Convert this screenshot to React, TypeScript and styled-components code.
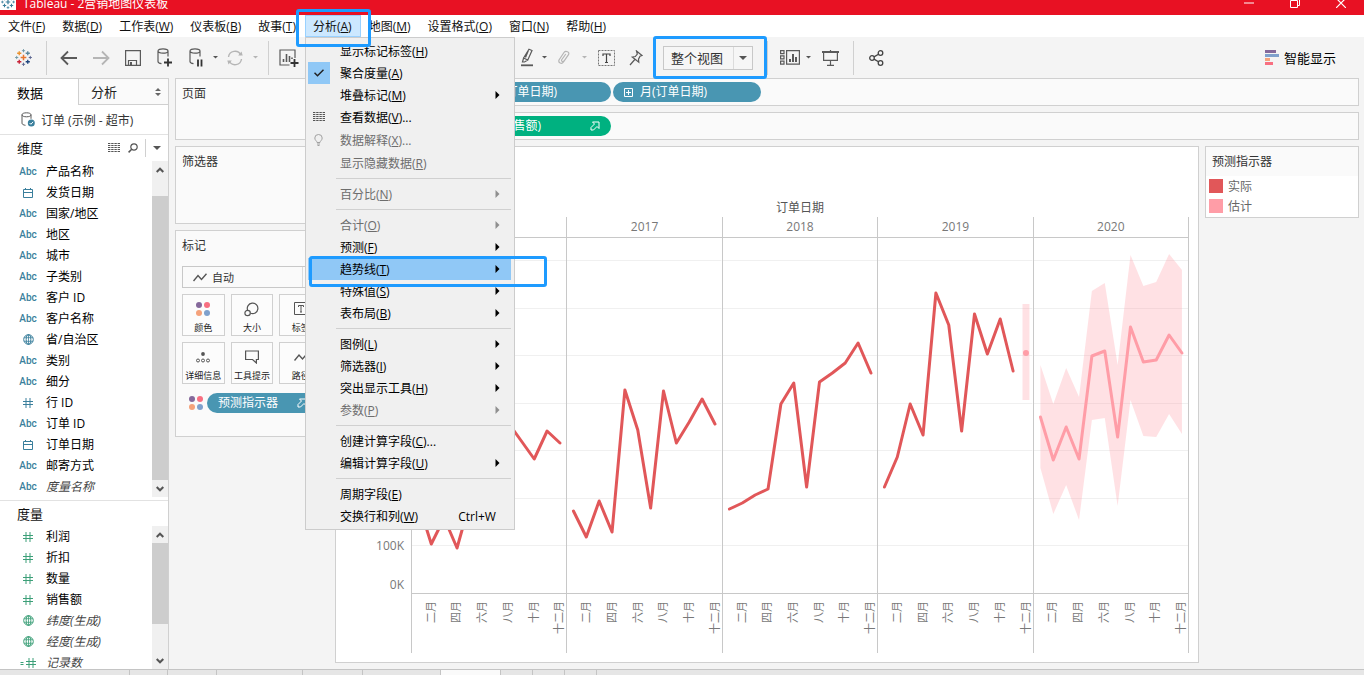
import React from "react";
import styled, { createGlobalStyle, css } from "styled-components";

const sans = `"Open Sans", "Noto Sans CJK SC", sans-serif`;
const line = "#d0d0d0";
const teal = "#4996b2";
const actual = "#e15759";
const estimate = "#ff9da7";

const Global = createGlobalStyle`
  * { box-sizing: border-box; }
  body { margin: 0; background: #f4f4f4; font-family: ${sans}; font-size: 12px; color: #111; }
  button, select { font: inherit; color: inherit; }
  button { border: 0; background: none; padding: 0; }
  ul { list-style: none; margin: 0; padding: 0; }
  h2 { margin: 0; font-weight: 400; }
  svg { display: block; flex: none; }
`;

/* ---------- shell ---------- */
const Page = styled.div`
  display: flex;
  flex-direction: column;
  height: 100vh;
  overflow: hidden;
`;
const TitleBar = styled.header`
  display: flex;
  align-items: flex-end;
  height: 15px;
  flex: none;
  overflow: hidden;
  background: #e81123;
  color: #fff;
`;
const AppIcon = styled.span`
  display: grid;
  place-items: center;
  width: 16px;
  height: 16px;
  margin: 0 7px 5px 0;
  background: #fff;
`;
const TitleText = styled.span`
  flex: 1;
  line-height: 22px;
  white-space: nowrap;
`;
const WindowButton = styled.button`
  display: grid;
  place-items: center;
  width: 46px;
  height: 24px;
`;
const MenuBar = styled.nav`
  display: flex;
  height: 22px;
  flex: none;
  background: #fff;
`;
const MenuEntry = styled.div`
  position: relative;
`;
const MenuTrigger = styled.button<{ $open?: boolean }>`
  height: 22px;
  padding: 2px 9px 0 8px;
  line-height: 20px;
  white-space: nowrap;
  ${(p) => p.$open && css`
    background: #cce8ff;
    box-shadow: inset 0 0 0 1px #99d1ff;
  `}
`;
const Callout = styled.span<{ $inset: string }>`
  position: absolute;
  inset: ${(p) => p.$inset};
  z-index: 30;
  border: 3px solid #1e9bff;
  border-radius: 3px;
  pointer-events: none;
`;

/* ---------- drop-down menu ---------- */
const Dropdown = styled.div`
  position: absolute;
  top: 22px;
  left: 0;
  z-index: 20;
  width: 210px;
  padding: 2px 3px 2px 2px;
  border: 1px solid #ccc;
  background: #f0f0f0;
`;
const MenuItem = styled.button<{ $hot?: boolean; $tall?: boolean }>`
  position: relative;
  display: flex;
  align-items: center;
  width: 100%;
  height: ${(p) => (p.$tall ? 24 : 22)}px;
  text-align: left;
  white-space: nowrap;
  color: #000;
  background: ${(p) => (p.$hot ? "#90c8f6" : "transparent")};
  &:disabled { color: #6d6d6d; }
`;
const ItemIcon = styled.span<{ $checked?: boolean }>`
  display: grid;
  place-items: center;
  width: 22px;
  height: 22px;
  margin-right: 10px;
  background: ${(p) => (p.$checked ? "#90c8f6" : "transparent")};
`;
const ItemText = styled.span`
  flex: 1;
  padding-top: 2px;
  line-height: 20px;
`;
const ItemEnd = styled.span`
  display: flex;
  justify-content: flex-end;
  padding-right: 11px;
`;
const ItemKey = styled(ItemEnd)`
  padding-top: 2px;
  padding-right: 15px;
  line-height: 20px;
`;
const MenuRule = styled.hr`
  height: 1px;
  margin: 4px 0 4px 28px;
  border: 0;
  background: ${line};
`;

/* ---------- toolbar ---------- */
const Toolbar = styled.div`
  display: flex;
  align-items: center;
  height: 41px;
  flex: none;
  padding-right: 28px;
`;
const Tool = styled.button<{ $w?: number }>`
  display: grid;
  place-items: center;
  width: ${(p) => p.$w ?? 32}px;
  height: 32px;
  flex: none;
`;
const ToolGap = styled.span<{ $w: number }>`
  width: ${(p) => p.$w}px;
  flex: none;
`;
const ToolRule = styled.span`
  width: 1px;
  height: 34px;
  flex: none;
  background: ${line};
`;
const Grow = styled.span`
  flex: 1;
`;
const FitBox = styled.div`
  position: relative;
  display: flex;
`;
const Picker = styled.div<{ $small?: boolean }>`
  display: flex;
  align-items: center;
  height: ${(p) => (p.$small ? 22 : 24)}px;
  width: ${(p) => (p.$small ? "auto" : "90px")};
  border: 1px solid #c8c8c8;
  background: ${(p) => (p.$small ? "#fafafa" : "#f6f6f6")};
  font-size: ${(p) => (p.$small ? 11 : 13)}px;
  color: #333;
  padding-left: ${(p) => (p.$small ? 10 : 7)}px;
`;
const PickerSelect = styled.select`
  appearance: none;
  flex: 1;
  min-width: 0;
  height: 100%;
  padding: 0;
  border: 0;
  outline: 0;
  background: transparent;
`;
const PickerCaret = styled.span`
  display: grid;
  place-items: center;
  width: 19px;
  height: 100%;
  flex: none;
  border-left: 1px solid #dcdcdc;
`;
const SmartButton = styled.button`
  display: flex;
  align-items: center;
  gap: 5px;
  font-size: 13px;
  color: #000;
`;

/* ---------- body ---------- */
const Body = styled.div`
  display: flex;
  flex: 1;
  min-height: 0;
  padding-right: 5px;
`;
const DataPane = styled.aside`
  display: flex;
  flex-direction: column;
  width: 169px;
  flex: none;
  background: #fff;
  border: solid ${line};
  border-width: 1px 1px 0 0;
`;
const PaneTabs = styled.div`
  display: flex;
  height: 26px;
  flex: none;
  font-size: 13px;
`;
const PaneTab = styled.button<{ $active?: boolean }>`
  display: flex;
  align-items: center;
  justify-content: space-between;
  width: ${(p) => (p.$active ? "78px" : "auto")};
  flex: ${(p) => (p.$active ? "none" : "1")};
  padding: 0 7px 0 ${(p) => (p.$active ? 17 : 12)}px;
  color: ${(p) => (p.$active ? "#000" : "#222")};
  ${(p) => !p.$active && css`
    border: solid ${line};
    border-width: 0 0 1px 1px;
    background: #fafafa;
  `}
`;
const SourceRow = styled.div`
  display: flex;
  align-items: center;
  gap: 6px;
  height: 30px;
  flex: none;
  padding-left: 21px;
  border-bottom: 1px solid #e2e2e2;
  color: #333;
`;
const PaneHead = styled.div<{ $rule?: boolean }>`
  display: flex;
  align-items: center;
  height: 26px;
  flex: none;
  padding-left: 17px;
  border-top: ${(p) => (p.$rule ? "1px solid #e2e2e2" : "0")};
  h2 { flex: 1; font-size: 13px; line-height: 20px; }
`;
const HeadTools = styled.div`
  display: flex;
  align-items: center;
  button { display: grid; place-items: center; height: 18px; }
  button:nth-child(1) { width: 14px; margin-right: 5px; }
  button:nth-child(2) { width: 14px; margin-right: 5px; }
  button:nth-child(3) { width: 23px; border-left: 1px solid ${line}; }
`;
const FieldBlock = styled.div<{ $fill?: boolean }>`
  display: flex;
  overflow: hidden;
  flex: ${(p) => (p.$fill ? "1" : "none")};
  min-height: 0;
  margin-bottom: ${(p) => (p.$fill ? 0 : 3)}px;
`;
const FieldList = styled.ul`
  flex: 1;
`;
const Field = styled.li<{ $generated?: boolean }>`
  display: flex;
  align-items: center;
  height: 21px;
  line-height: 14px;
  white-space: nowrap;
  color: ${(p) => (p.$generated ? "#444" : "#000")};
  font-style: ${(p) => (p.$generated ? "italic" : "normal")};
`;
const FieldIcon = styled.span<{ $measure?: boolean }>`
  display: grid;
  place-items: center;
  width: 20px;
  margin: 0 8px 0 18px;
  font: 500 10px/12px Roboto, sans-serif;
  color: ${(p) => (p.$measure ? "#3c9f78" : "#3a7f9c")};
`;
const Scroll = styled.div`
  display: flex;
  flex-direction: column;
  align-items: center;
  width: 16px;
  background: #f0f0f0;
`;
const ScrollArrow = styled.button`
  display: grid;
  place-items: center;
  width: 100%;
  height: 17px;
  flex: none;
`;
const ScrollThumb = styled.span<{ $before: number; $after: number }>`
  width: 100%;
  flex: 1;
  margin: ${(p) => p.$before}px 0 ${(p) => p.$after}px;
  background: #cdcdcd;
`;
const Cards = styled.div`
  display: flex;
  flex-direction: column;
  gap: 6px;
  width: 154px;
  flex: none;
  margin: 0 6px;
`;
const Card = styled.section<{ $h: number }>`
  min-height: ${(p) => p.$h}px;
  padding: 0 6px;
  border: 1px solid ${line};
  background: #fafafa;
  h2 { font-size: 12px; line-height: 30px; margin-bottom: 5px; color: #333; }
`;
const MarkGrid = styled.div`
  display: grid;
  grid-template-columns: repeat(3, 1fr);
  gap: 6px;
  margin-top: 6px;
`;
const MarkButton = styled.button`
  display: flex;
  flex-direction: column;
  align-items: center;
  justify-content: space-between;
  height: 42px;
  padding: 7px 0 0;
  border: 1px solid ${line};
  background: #fcfcfc;
  font-size: 9px;
  line-height: 14px;
  white-space: nowrap;
  color: #222;
`;
const PillRow = styled.div`
  display: flex;
  align-items: center;
  gap: 4px;
  margin-top: 9px;
  padding: 0 4px 0 7px;
`;
const Pill = styled.button<{ $green?: boolean; $fill?: boolean }>`
  display: flex;
  align-items: center;
  gap: 7px;
  width: 148px;
  ${(p) => p.$fill && css`width: auto; flex: 1;`}
  height: 20px;
  padding: 0 11px;
  border-radius: 10px;
  background: ${(p) => (p.$green ? "#00b180" : teal)};
  color: #fff;
  white-space: nowrap;
  text-align: left;
`;
const PillText = styled.span`
  flex: 1;
  line-height: 18px;
`;
const Main = styled.main`
  display: flex;
  flex-direction: column;
  gap: 6px;
  flex: 1;
  min-width: 0;
  padding-bottom: 6px;
`;
const Shelf = styled.div`
  display: flex;
  align-items: center;
  gap: 2px;
  height: 28px;
  flex: none;
  padding-left: 127px;
  border: 1px solid ${line};
  background: #fafafa;
`;
const ViewRow = styled.div`
  display: flex;
  align-items: flex-start;
  gap: 6px;
  flex: 1;
  min-height: 0;
`;

/* ---------- chart ---------- */
const Chart = styled.section`
  display: flex;
  flex-direction: column;
  align-self: stretch;
  flex: 1;
  min-width: 0;
  padding: 0 9px 9px 0;
  border: 1px solid ${line};
  background: #fff;
  color: #787878;
`;
const ChartTitle = styled.h2`
  height: 70px;
  flex: none;
  padding: 52px 0 0 75px;
  font-size: 12px;
  line-height: 18px;
  text-align: center;
  color: #555;
`;
const Panes = styled.div`
  display: grid;
  grid-template-columns: 75px repeat(5, 1fr);
  flex: 1;
  min-height: 0;
  border-right: 1px solid #c8c8c8;
`;
const AxisColumn = styled.div`
  display: flex;
  flex-direction: column;
  justify-content: flex-end;
  gap: 23px;
  padding: 0 7px 60px 0;
  text-align: right;
  line-height: 16px;
`;
const Pane = styled.div`
  display: flex;
  flex-direction: column;
  min-width: 0;
  min-height: 0;
  border-left: 1px solid #c8c8c8;
`;
const PaneYear = styled.div`
  height: 21px;
  flex: none;
  line-height: 20px;
  text-align: center;
  border-bottom: 1px solid #c8c8c8;
`;
const Plot = styled.svg`
  width: 100%;
  flex: 1 1 0;
  min-height: 0;
`;
const Months = styled.div`
  display: grid;
  grid-template-columns: repeat(12, 1fr);
  height: 60px;
  flex: none;
  padding-top: 7px;
  border-top: 1px solid #c8c8c8;
`;
const Month = styled.span<{ $col: number }>`
  grid-column: ${(p) => p.$col};
  grid-row: 1;
  justify-self: center;
  align-self: start;
  writing-mode: vertical-rl;
  text-orientation: sideways;
  transform: rotate(180deg);
  font-size: 11px;
  line-height: 14px;
  white-space: nowrap;
`;
const Legend = styled.aside`
  width: 154px;
  flex: none;
  padding-bottom: 1px;
  border: 1px solid ${line};
  background: #fff;
  h2 {
    padding-left: 6px;
    font-size: 12px;
    line-height: 29px;
    color: #333;
    background: #fafafa;
  }
`;
const LegendRow = styled.div`
  display: flex;
  align-items: center;
  gap: 5px;
  height: 20px;
  padding-left: 3px;
  color: #666;
`;
const Swatch = styled.span<{ $color: string }>`
  width: 14px;
  height: 14px;
  background: ${(p) => p.$color};
`;
const SheetTabs = styled.footer`
  display: flex;
  height: 6px;
  flex: none;
  border-top: 1px solid #c4c4c4;
  background: #e6e6e6;
`;
const SheetTab = styled.span<{ $w: number; $active?: boolean }>`
  width: ${(p) => p.$w}px;
  border-right: 1px solid #c4c4c4;
  background: ${(p) => (p.$active ? "#fafafa" : "transparent")};
`;

/* ---------- icons ---------- */
const ink = "#5a5a5a";
const faint = "#b5b5b5";

const Caret = ({ color = "#555", size = 8 }: { color?: string; size?: number }) => (
  <svg width={size} height={size / 2} viewBox="0 0 8 4"><path d="M0 0h8L4 4z" fill={color} /></svg>
);
const cross = (x: number, y: number, r: number) => `M${x - r} ${y}h${r * 2}M${x} ${y - r}v${r * 2}`;
const LogoIcon = ({ size = 17, mono }: { size?: number; mono?: string }) => (
  <svg width={size} height={size} viewBox="0 0 18 18" fill="none" strokeWidth="1.4">
    <path d={cross(9, 9, 3)} stroke={mono ?? "#e8762d"} strokeWidth="1.6" />
    <path d={cross(4.5, 4.5, 2.2)} stroke={mono ?? "#eb912c"} />
    <path d={cross(13.5, 4.5, 2.2)} stroke={mono ?? "#59879b"} />
    <path d={cross(4.5, 13.5, 2.2)} stroke={mono ?? "#c72035"} />
    <path d={cross(13.5, 13.5, 2.2)} stroke={mono ?? "#1f457e"} />
    <path d={cross(9, 1.8, 1.7) + cross(1.8, 9, 1.7)} stroke={mono ?? "#7199a6"} strokeWidth="1" />
    <path d={cross(16.2, 9, 1.7) + cross(9, 16.2, 1.7)} stroke={mono ?? "#5b6591"} strokeWidth="1" />
  </svg>
);
const ArrowIcon = ({ forward }: { forward?: boolean }) => (
  <svg width="18" height="16" viewBox="0 0 18 16" fill="none" stroke={forward ? faint : ink} strokeWidth="1.8">
    <path d={forward ? "M1 8h15M10 1.5L16.5 8L10 14.5" : "M17 8H2M8 1.5L1.5 8L8 14.5"} />
  </svg>
);
const SaveIcon = () => (
  <svg width="16" height="16" viewBox="0 0 16 16" fill="none" stroke={ink} strokeWidth="1.2">
    <path d="M.6.6h14.8v14.8H.6zM3.5 15v-4.5h8V15" /><path d="M5 12h2v3H5z" fill={ink} stroke="none" />
  </svg>
);
const cylinder = "M1 3v10.500c0 1 1.500 1.900 3.500 2.100M11 3v5.500M1 3c0-1.300 2.200-2.200 5-2.200s5 .9 5 2.200-2.200 2.200-5 2.200S1 4.300 1 3z";
const AddSourceIcon = () => (
  <svg width="16" height="19" viewBox="0 0 16 19" fill="none" stroke={ink} strokeWidth="1.200">
    <path d={cylinder} /><path d="M7 14.500h8M11 10.500v8" stroke="#333" strokeWidth="1.800" />
  </svg>
);
const PauseSourceIcon = () => (
  <svg width="14" height="19" viewBox="0 0 14 19" fill="none" stroke={ink} strokeWidth="1.200">
    <path d={cylinder} /><path d="M9 11.500v7M12.500 11.500v7" stroke="#333" strokeWidth="1.800" />
  </svg>
);
const RefreshIcon = () => (
  <svg width="18" height="16" viewBox="0 0 18 16" fill="none" stroke={faint} strokeWidth="1.400">
    <path d="M2.500 7A6.500 6.500 0 0 1 14.800 5M15.500 9A6.500 6.500 0 0 1 3.200 11" />
    <path d="M12.200 5.500h4.500L15.500 1.500zM5.800 10.500H1.300l1.200 4z" fill={faint} stroke="none" />
  </svg>
);
const NewSheetIcon = () => (
  <svg width="20" height="18" viewBox="0 0 20 18" fill="none" stroke={ink} strokeWidth="1.200">
    <path d="M16 9V1H1v15h9.500" /><path d="M4.500 13v-3M7.500 13V5M10.500 13V7M13 10V8.500" strokeWidth="1.600" />
    <path d="M11.500 14h8M15.500 10v8" stroke="#333" strokeWidth="1.800" />
  </svg>
);
const HighlighterIcon = () => (
  <svg width="14" height="19" viewBox="0 0 14 19" fill="none" stroke={ink} strokeWidth="1.200">
    <path d="M9 1.200l3 1.300-4.200 9.500-4.200-2zM3.600 10L2.500 14l2 0 3.300-2M8.300 2.800L5.500 9.500" />
    <path d="M1 17.300h12" strokeWidth="1.800" />
  </svg>
);
const ClipIcon = () => (
  <svg width="14" height="16" viewBox="0 0 14 16" fill="none" stroke={faint} strokeWidth="1.200">
    <path d="M11 5.500L6.500 12c-1.800 2.400-5.500 1-4.500-2L7 2.500c1.600-2.300 6-.6 4.500 2.200L7 11c-1 1.200-3 .4-2.300-1.300L8.800 4" />
  </svg>
);
const TextIcon = () => (
  <svg width="17" height="16" viewBox="0 0 17 16" fill="none" stroke="#777">
    <path d="M.5.5h16v15H.5z" strokeDasharray="2 1" /><path d="M5 6V4h7v2M8.500 4v8.500M7 12.500h3" stroke="#444" strokeWidth="1.200" />
  </svg>
);
const PinIcon = () => (
  <svg width="14" height="16" viewBox="0 0 14 16" fill="none" stroke={ink} strokeWidth="1.200">
    <path d="M7.500 1l5.500 4.500-2 .7-1.500 3 .3 3-6.500-5.200 3-.5 2-2.500zM5.800 9.500L1 15" />
  </svg>
);
const CardsIcon = () => (
  <svg width="20" height="15" viewBox="0 0 20 15" fill="none" stroke={ink} strokeWidth="1.200">
    <path d="M.6.600h3.400v3H.6zM.6 5.900h3.400v3H.6zM.6 11.100h3.400v3H.6zM6.600.600h12.800v13.600H6.600z" />
    <path d="M10 12V9M13 12V4M16 12V7" strokeWidth="2" />
  </svg>
);
const PresentIcon = () => (
  <svg width="17" height="16" viewBox="0 0 17 16" fill="none" stroke={ink} strokeWidth="1.200">
    <path d="M0 2h17" strokeWidth="2" /><path d="M8.500 0v2M1.600 3v7.400h13.800V3M8.500 10.400v5M5 15.400h7" />
  </svg>
);
const ShareIcon = () => (
  <svg width="15" height="16" viewBox="0 0 15 16" fill="none" stroke="#444" strokeWidth="1.300">
    <circle cx="3" cy="8" r="2.300" /><circle cx="11.500" cy="3" r="2.300" /><circle cx="11.500" cy="13" r="2.300" />
    <path d="M5 6.900l4.500-2.700M5 9.100l4.500 2.700" />
  </svg>
);
const SmartIcon = () => (
  <svg width="14" height="15"><path d="M0 0h11v3H0z" fill="#85699b" /><path d="M0 4h14v3H0z" fill="#7fa1cd" /><path d="M0 8h5v3H0z" fill="#f5a27b" /><path d="M0 12h8v3H0z" fill="#f86f81" /></svg>
);
const GridIcon = () => (
  <svg width="12" height="10" viewBox="0 0 12 10" stroke="#555" strokeWidth="1" strokeDasharray="2.400 .8">
    <path d="M0 .500h12M0 2.500h12M0 4.500h12M0 6.500h12M0 8.500h12" />
  </svg>
);
const SearchIcon = () => (
  <svg width="10" height="10" viewBox="0 0 10 10" fill="none" stroke="#555" strokeWidth="1.200"><circle cx="6" cy="4" r="3.200" /><path d="M3.700 6.300L.6 9.400" strokeWidth="1.500" /></svg>
);
const SourceIcon = () => (
  <svg width="14" height="15" viewBox="0 0 14 15" fill="none" stroke={ink}>
    <path d="M1 2.800v8.500c0 1 1.500 1.800 3.500 2M10 2.800v4M1 2.800C1 1.500 3 .8 5.500.8s4.500.7 4.500 2-2 2-4.500 2-4.500-.7-4.500-2z" />
    <circle cx="10.300" cy="11" r="3.500" fill="#3a7f9c" stroke="none" /><path d="M8.600 11l1.300 1.300 2.200-2.500" stroke="#fff" />
  </svg>
);
const SortIcon = () => (
  <svg width="6" height="8" viewBox="0 0 6 8" fill="#666"><path d="M0 3h6L3 0zM0 5h6L3 8z" /></svg>
);
const CalendarIcon = () => (
  <svg width="10" height="10" viewBox="0 0 10 10" fill="none" stroke="currentColor"><path d="M.5 1.500h9v8h-9zM.5 4.500h9M2.500 0v1.500M7.500 0v1.500" /></svg>
);
const GlobeIcon = () => (
  <svg width="11" height="11" viewBox="0 0 11 11" fill="none" stroke="currentColor"><circle cx="5.500" cy="5.500" r="4.800" /><ellipse cx="5.500" cy="5.500" rx="2.300" ry="4.800" /><path d="M5.500.5v10M1 3.700h9M1 7.300h9" strokeWidth=".8" /></svg>
);
const HashIcon = ({ calc }: { calc?: boolean }) => (
  <svg width={calc ? 16 : 10} height="10" viewBox={calc ? "-6 0 16 10" : "0 0 10 10"} fill="none" stroke="currentColor"><path d="M3 0v10M7 0v10M0 3.500h10M0 6.500h10" />{calc && <path d="M-5.500 4.500h3M-5.500 6.500h3" />}</svg>
);
const Chevron = ({ up }: { up?: boolean }) => (
  <svg width="8" height="6" viewBox="0 0 8 6" fill="none" stroke="#555" strokeWidth="2"><path d={up ? "M.7 5L4 1.700L7.300 5" : "M.7 1L4 4.300L7.300 1"} /></svg>
);
const DotsIcon = () => (
  <svg width="14" height="14" viewBox="0 0 14 14"><circle cx="3" cy="3" r="3" fill="#85699b" /><circle cx="11" cy="3" r="3" fill="#f86f81" /><circle cx="3" cy="11" r="3" fill="#f5a27b" /><circle cx="11" cy="11" r="3" fill="#7fa1cd" /></svg>
);
const ZigIcon = ({ w = 14, h = 9 }: { w?: number; h?: number }) => (
  <svg width={w} height={h} viewBox="0 0 14 9" fill="none" stroke="#555" strokeWidth="1.400"><path d="M.5 8L5 2.500L8.500 6.500L13.500.8" /></svg>
);
const SizeIcon = () => (
  <svg width="15" height="15" viewBox="0 0 15 15" fill="none" stroke="#555" strokeWidth="1.200"><path d="M3.600 8.200A5.300 5.300 0 1 1 6.600 11.300" /><circle cx="3.600" cy="11" r="2.700" /></svg>
);
const LabelIcon = () => (
  <svg width="14" height="13" viewBox="0 0 14 13" fill="none" stroke="#555"><path d="M.5.500h13v12H.5z" /><path d="M4.500 5V3.500h5V5M7 3.500V10M6 10h2" /></svg>
);
const DetailIcon = () => (
  <svg width="14" height="14" viewBox="0 0 14 14" fill="none" stroke="#555"><circle cx="7" cy="4" r="1.900" fill="#555" stroke="none" /><circle cx="2" cy="10.500" r="1.500" /><circle cx="7" cy="10.500" r="1.500" /><circle cx="12" cy="10.500" r="1.500" /></svg>
);
const TooltipIcon = () => (
  <svg width="14" height="14" viewBox="0 0 14 14" fill="none" stroke="#555" strokeWidth="1.200"><path d="M.6 1h12.800v8.500h-2V13L7.500 9.500H.6z" /></svg>
);
const ForecastIcon = () => (
  <svg width="10" height="10" viewBox="0 0 10 10" fill="none" stroke="#fff"><path d="M2.500 1h6.500v6.500L7 5.500 3.500 9 1 9 1 6.500 4.500 3z" /></svg>
);
const PlusBoxIcon = () => (
  <svg width="9" height="9" viewBox="0 0 9 9" fill="none" stroke="#fff"><path d="M.5.500h8v8h-8zM2 4.500h5M4.500 2v5" /></svg>
);
const CheckIcon = () => (
  <svg width="10" height="8" viewBox="0 0 10 8" fill="none" stroke="#222" strokeWidth="1.500"><path d="M.5 3.800L3.500 6.800L9.500.8" /></svg>
);
const BulbIcon = () => (
  <svg width="9" height="12" viewBox="0 0 9 12" fill="none" stroke="#a0a0a0"><path d="M3 8.500C3 7 .8 6.300.8 4a3.700 3.500 0 0 1 7.400 0C8.200 6.300 6 7 6 8.500zM3 10h3M3.500 11.500h2" /></svg>
);
const SubmenuIcon = ({ muted }: { muted?: boolean }) => (
  <svg width="5" height="8" viewBox="0 0 5 8"><path d="M.5 0L4.500 4L.5 8z" fill={muted ? "#8f8f8f" : "#000"} /></svg>
);

/* ---------- data ---------- */
type Entry = { text: string; hot: string; tail?: string; icon?: React.ReactNode; checked?: boolean; off?: boolean; sub?: boolean; keys?: string; tall?: boolean; marked?: boolean };
const groups: Entry[][] = [
  [
    { text: "显示标记标签", hot: "H" },
    { text: "聚合度量", hot: "A", icon: <CheckIcon />, checked: true },
    { text: "堆叠标记", hot: "M", sub: true },
    { text: "查看数据", hot: "V", tail: "...", icon: <GridIcon /> },
    { text: "数据解释", hot: "X", tail: "...", icon: <BulbIcon />, off: true, tall: true },
    { text: "显示隐藏数据", hot: "R", off: true },
  ],
  [{ text: "百分比", hot: "N", off: true, sub: true }],
  [
    { text: "合计", hot: "O", off: true, sub: true },
    { text: "预测", hot: "F", sub: true },
    { text: "趋势线", hot: "T", sub: true, marked: true },
    { text: "特殊值", hot: "S", sub: true },
    { text: "表布局", hot: "B", sub: true },
  ],
  [
    { text: "图例", hot: "L", sub: true },
    { text: "筛选器", hot: "I", sub: true },
    { text: "突出显示工具", hot: "H", sub: true },
    { text: "参数", hot: "P", off: true, sub: true },
  ],
  [
    { text: "创建计算字段", hot: "C", tail: "..." },
    { text: "编辑计算字段", hot: "U", sub: true },
  ],
  [
    { text: "周期字段", hot: "E" },
    { text: "交换行和列", hot: "W", keys: "Ctrl+W" },
  ],
];

const menus: [string, string][] = [
  ["文件", "F"], ["数据", "D"], ["工作表", "W"], ["仪表板", "B"], ["故事", "T"],
  ["分析", "A"], ["地图", "M"], ["设置格式", "O"], ["窗口", "N"], ["帮助", "H"],
];

type Kind = "abc" | "date" | "geo" | "num" | "calc";
const dimensions: [Kind, string][] = [
  ["abc", "产品名称"], ["date", "发货日期"], ["abc", "国家/地区"], ["abc", "地区"],
  ["abc", "城市"], ["abc", "子类别"], ["abc", "客户 ID"], ["abc", "客户名称"],
  ["geo", "省/自治区"], ["abc", "类别"], ["abc", "细分"], ["num", "行 ID"],
  ["abc", "订单 ID"], ["date", "订单日期"], ["abc", "邮寄方式"], ["abc", "度量名称"],
];
const measures: [Kind, string][] = [
  ["num", "利润"], ["num", "折扣"], ["num", "数量"], ["num", "销售额"],
  ["geo", "纬度(生成)"], ["geo", "经度(生成)"], ["calc", "记录数"],
];
const generated = ["度量名称", "纬度(生成)", "经度(生成)", "记录数"];
const kindIcon: Record<Kind, React.ReactNode> = {
  abc: "Abc", date: <CalendarIcon />, geo: <GlobeIcon />, num: <HashIcon />, calc: <HashIcon calc />,
};

/* Depth of each monthly mark below the top of a pane that is 355 units high. */
const years: { year: string; marks: number[]; forecast?: boolean }[] = [
  { year: "", marks: [265, 306, 280, 310, 264, 200, 260, 185, 203, 221, 193, 205] },
  { year: "2017", marks: [273, 299, 263, 294, 152, 192, 270, 153, 205, 184, 161, 186] },
  { year: "2018", marks: [271, 265, 257, 251, 166, 145, 249, 144, 135, 125, 105, 135] },
  { year: "2019", marks: [249, 219, 166, 197, 55, 87, 193, 76, 116, 81, 133] },
  { year: "2020", marks: [179, 222, 189, 221, 118, 113, 199, 89, 124, 122, 97, 115], forecast: true },
];
const upper = [127, 166, 130, 159, 53, 45, 127, 17, 48, 44, 16, 32];
const lower = [230, 276, 247, 282, 182, 180, 268, 162, 198, 199, 176, 196];
const gridlines = [22, 70, 117, 165, 212, 260, 307];
const at = (i: number, y: number) => `${i * 10 + 5},${y}`;
const months = ["二月", "四月", "六月", "八月", "十月", "十二月"];

/* ---------- parts ---------- */
const AnalysisMenu = () => (
  <Dropdown role="menu">
    {groups.map((group, g) => (
      <React.Fragment key={g}>
        {g > 0 && <MenuRule />}
        {group.map((e) => (
          <MenuItem key={e.text} role="menuitem" disabled={e.off} $hot={e.marked} $tall={e.tall}>
            <ItemIcon $checked={e.checked}>{e.icon}</ItemIcon>
            <ItemText>{e.text}(<u>{e.hot}</u>){e.tail}</ItemText>
            {e.keys && <ItemKey>{e.keys}</ItemKey>}
            {e.sub && <ItemEnd><SubmenuIcon muted={e.off} /></ItemEnd>}
            {e.marked && <Callout $inset="-2px -36px -7px 1px" />}
          </MenuItem>
        ))}
      </React.Fragment>
    ))}
  </Dropdown>
);

const Fields = ({ items, measure }: { items: [Kind, string][]; measure?: boolean }) => (
  <FieldBlock $fill={measure}>
    <FieldList>
      {items.map(([kind, name]) => (
        <Field key={name} $generated={generated.includes(name)}>
          <FieldIcon $measure={measure}>{kindIcon[kind]}</FieldIcon>
          {name}
        </Field>
      ))}
    </FieldList>
    <Scroll>
      <ScrollArrow aria-label="向上"><Chevron up /></ScrollArrow>
      <ScrollThumb $before={measure ? 0 : 18} $after={measure ? 28 : 0} />
      <ScrollArrow aria-label="向下"><Chevron /></ScrollArrow>
    </Scroll>
  </FieldBlock>
);

const SalesChart = () => (
  <Chart>
    <ChartTitle>订单日期</ChartTitle>
    <Panes>
      <AxisColumn><span>100K</span><span>0K</span></AxisColumn>
      {years.map(({ year, marks, forecast }, n) => (
        <Pane key={n}>
          <PaneYear>{year}</PaneYear>
          <Plot viewBox="0 0 120 355" preserveAspectRatio="none">
            {gridlines.map((y) => <rect key={y} x="0" y={y} width="120" height="1" fill="#f0f0f0" />)}
            {forecast && (
              <polygon
                points={[...upper.map((y, i) => at(i, y)), ...lower.map((y, i) => at(i, y)).reverse()].join(" ")}
                fill={estimate}
                opacity="0.3"
              />
            )}
            {year === "2019" && (
              <>
                <rect x="112.300" y="66" width="5.400" height="96" fill={estimate} opacity="0.3" />
                <path d="M115 115h.01" stroke={estimate} strokeWidth="6" strokeLinecap="round" vectorEffect="non-scaling-stroke" />
              </>
            )}
            <polyline
              points={marks.map((y, i) => at(i, y)).join(" ")}
              fill="none"
              stroke={forecast ? estimate : actual}
              strokeWidth="3"
              strokeLinecap="round"
              strokeLinejoin="round"
              vectorEffect="non-scaling-stroke"
            />
          </Plot>
          <Months>
            {months.map((m, i) => <Month key={m} $col={i * 2 + 2}>{m}</Month>)}
          </Months>
        </Pane>
      ))}
    </Panes>
  </Chart>
);

export default function App() {
  return (
    <Page>
      <Global />
      <TitleBar>
        <AppIcon><LogoIcon size={14} mono="#3a7f9c" /></AppIcon>
        <TitleText>Tableau - 2营销地图仪表板</TitleText>
        <WindowButton aria-label="最小化"><svg width="10" height="2"><path d="M0 1h10" stroke="#fff" /></svg></WindowButton>
        <WindowButton aria-label="还原"><svg width="10" height="10" fill="none" stroke="#fff"><path d="M.5 2.500h7v7h-7zM2.500 2.500v-2h7v7h-2" /></svg></WindowButton>
        <WindowButton aria-label="关闭"><svg width="10" height="10" stroke="#fff" strokeWidth="1.200"><path d="M0 0l10 10M10 0L0 10" /></svg></WindowButton>
      </TitleBar>

      <MenuBar>
        {menus.map(([name, key]) => (
          <MenuEntry key={name}>
            <MenuTrigger $open={name === "分析"}>{name}(<u>{key}</u>)</MenuTrigger>
            {name === "分析" && <><AnalysisMenu /><Callout $inset="-6px -10px -10px -9px" /></>}
          </MenuEntry>
        ))}
      </MenuBar>

      <Toolbar>
        <Tool $w={46} aria-label="起始页"><LogoIcon /></Tool>
        <ToolRule />
        <ToolGap $w={6} />
        <Tool aria-label="撤销"><ArrowIcon /></Tool>
        <Tool aria-label="重做"><ArrowIcon forward /></Tool>
        <Tool aria-label="保存"><SaveIcon /></Tool>
        <Tool aria-label="新建数据源"><AddSourceIcon /></Tool>
        <Tool $w={30} aria-label="暂停自动更新"><PauseSourceIcon /></Tool>
        <Tool $w={8} aria-label="更新选项"><Caret size={5} /></Tool>
        <Tool aria-label="运行更新"><RefreshIcon /></Tool>
        <Tool $w={8} aria-label="运行选项"><Caret size={5} color={faint} /></Tool>
        <ToolGap $w={9} />
        <ToolRule />
        <ToolGap $w={4} />
        <Tool aria-label="新建工作表"><NewSheetIcon /></Tool>
        <ToolGap $w={209} />
        <Tool $w={26} aria-label="突出显示"><HighlighterIcon /></Tool>
        <Tool $w={8} aria-label="突出显示选项"><Caret size={5} /></Tool>
        <ToolGap $w={4} />
        <Tool $w={24} aria-label="组成员"><ClipIcon /></Tool>
        <ToolGap $w={4} />
        <Tool $w={8} aria-label="组选项"><Caret size={5} color={faint} /></Tool>
        <ToolGap $w={6} />
        <Tool $w={24} aria-label="标记标签"><TextIcon /></Tool>
        <ToolGap $w={6} />
        <Tool $w={24} aria-label="固定轴"><PinIcon /></Tool>
        <ToolGap $w={15} />
        <FitBox>
          <Picker>
            <PickerSelect aria-label="适合"><option>整个视图</option></PickerSelect>
            <PickerCaret><Caret /></PickerCaret>
          </Picker>
          <Callout $inset="-10px -14px -9px -10px" />
        </FitBox>
        <ToolGap $w={14} />
        <ToolRule />
        <ToolGap $w={8} />
        <Tool $w={28} aria-label="显示卡"><CardsIcon /></Tool>
        <Tool $w={8} aria-label="显示卡选项"><Caret size={5} /></Tool>
        <ToolGap $w={2} />
        <Tool aria-label="演示模式"><PresentIcon /></Tool>
        <ToolGap $w={7} />
        <ToolRule />
        <ToolGap $w={6} />
        <Tool aria-label="共享"><ShareIcon /></Tool>
        <Grow />
        <SmartButton><SmartIcon />智能显示</SmartButton>
      </Toolbar>

      <Body>
        <DataPane>
          <PaneTabs>
            <PaneTab $active>数据</PaneTab>
            <PaneTab>分析<SortIcon /></PaneTab>
          </PaneTabs>
          <SourceRow><SourceIcon />订单 (示例 - 超市)</SourceRow>
          <PaneHead>
            <h2>维度</h2>
            <HeadTools>
              <button aria-label="查看数据"><GridIcon /></button>
              <button aria-label="查找字段"><SearchIcon /></button>
              <button aria-label="选项"><Caret /></button>
            </HeadTools>
          </PaneHead>
          <Fields items={dimensions} />
          <PaneHead $rule><h2>度量</h2></PaneHead>
          <Fields items={measures} measure />
        </DataPane>

        <Cards>
          <Card $h={62}><h2>页面</h2></Card>
          <Card $h={78}><h2>筛选器</h2></Card>
          <Card $h={207}>
            <h2 id="marks">标记</h2>
            <Picker $small>
              <ZigIcon />
              <ToolGap $w={5} />
              <PickerSelect aria-labelledby="marks"><option>自动</option></PickerSelect>
              <PickerCaret><Caret /></PickerCaret>
            </Picker>
            <MarkGrid>
              <MarkButton><DotsIcon />颜色</MarkButton>
              <MarkButton><SizeIcon />大小</MarkButton>
              <MarkButton><LabelIcon />标签</MarkButton>
              <MarkButton><DetailIcon />详细信息</MarkButton>
              <MarkButton><TooltipIcon />工具提示</MarkButton>
              <MarkButton><ZigIcon h={14} />路径</MarkButton>
            </MarkGrid>
            <PillRow>
              <DotsIcon />
              <Pill $fill><PillText>预测指示器</PillText><ForecastIcon /></Pill>
            </PillRow>
          </Card>
        </Cards>

        <Main>
          <Shelf>
            <Pill><PlusBoxIcon /><PillText>年(订单日期)</PillText></Pill>
            <Pill><PlusBoxIcon /><PillText>月(订单日期)</PillText></Pill>
          </Shelf>
          <Shelf>
            <Pill $green><PillText>总和(销售额)</PillText><ForecastIcon /></Pill>
          </Shelf>
          <ViewRow>
            <SalesChart />
            <Legend>
              <h2>预测指示器</h2>
              <LegendRow><Swatch $color={actual} />实际</LegendRow>
              <LegendRow><Swatch $color={estimate} />估计</LegendRow>
            </Legend>
          </ViewRow>
        </Main>
      </Body>

      <SheetTabs>
        {[130, 38, 49, 86, 60, 78, 60, 32, 32, 32].map((w, i) => (
          <SheetTab key={i} $w={w} $active={i === 6} />
        ))}
      </SheetTabs>
    </Page>
  );
}
